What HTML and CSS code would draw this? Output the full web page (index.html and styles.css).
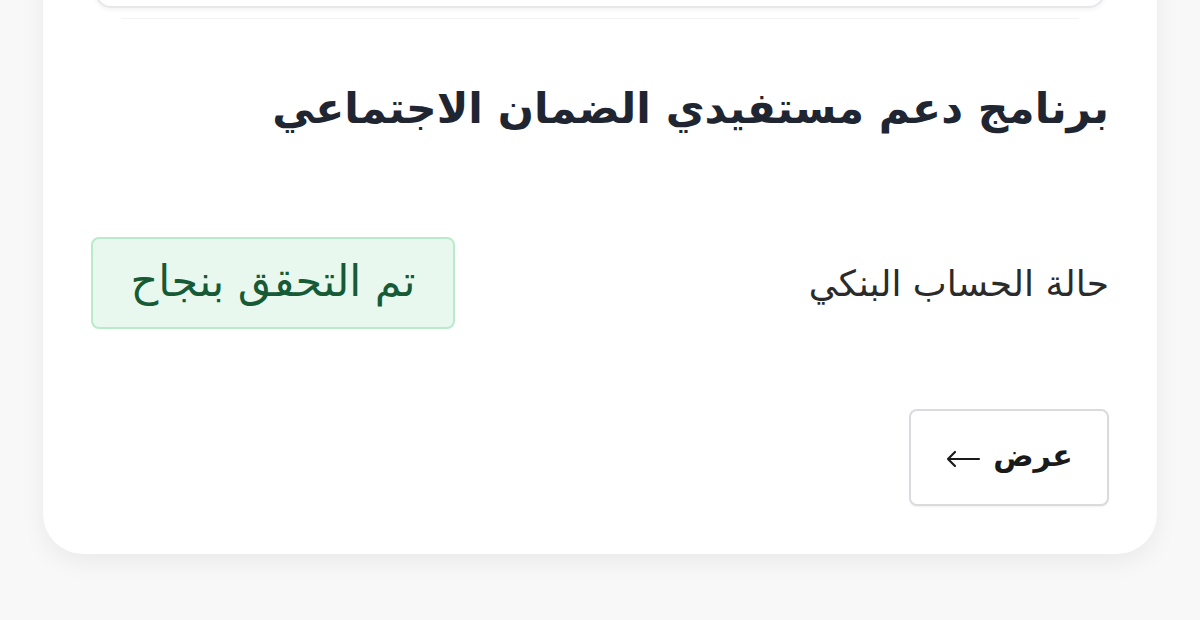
FILE: index.html
```html
<!DOCTYPE html>
<html lang="ar" dir="rtl">
<head>
<meta charset="utf-8">
<link rel="stylesheet" href="styles.css">
</head>
<body>
<div class="page">
  <div class="card">
    <div class="top-box"></div>
    <div class="divider"></div>
    <h1 class="title">برنامج دعم مستفيدي الضمان الاجتماعي</h1>
    <div class="row">
      <span class="label">حالة الحساب البنكي</span>
      <span class="badge">تم التحقق بنجاح</span>
    </div>
    <div class="actions">
      <button class="btn">عرض <svg class="arrow" width="36" height="22" viewBox="0 0 36 22" aria-hidden="true"><path d="M34 11H3M10 4L3 11L10 18" fill="none" stroke="#1a1a1a" stroke-width="2.2" stroke-linecap="round" stroke-linejoin="round"/></svg></button>
    </div>
  </div>
</div>
</body>
</html>
```
FILE: styles.css
```css
html, body {
  margin: 0;
  padding: 0;
  background: #f8f8f9;
  font-family: "DejaVu Sans", "Noto Sans", sans-serif;
}
.page {
  padding: 0 43px;
  height: 620px;
  overflow: hidden;
}
.card {
  margin-top: -60px;
  background: #ffffff;
  border-radius: 0 0 40px 40px;
  box-shadow: 0 8px 24px rgba(0,0,0,0.06);
  padding: 0 48px 48px 48px;
}
.top-box {
  margin: 0 4px;
  height: 66px;
  border: 2px solid #e5e7eb;
  border-top: none;
  border-radius: 0 0 16px 16px;
  box-shadow: 0 2px 4px rgba(0,0,0,0.05);
}
.divider {
  margin: 10px 30px 0;
  height: 1px;
  background: #f2f3f4;
}
.title {
  margin: 60px 0 0;
  font-size: 42.5px;
  font-weight: 700;
  color: #1f2632;
  line-height: 60px;
}
.row {
  margin-top: 98px;
  display: flex;
  justify-content: space-between;
  align-items: center;
}
.label {
  font-size: 36px;
  color: #2b2b2b;
}
.badge {
  width: 364px;
  height: 92px;
  box-sizing: border-box;
  display: flex;
  align-items: center;
  justify-content: center;
  background: #e8f8ee;
  border: 2px solid #b9ebcb;
  border-radius: 8px;
  color: #175a36;
  font-size: 43px;
  padding-bottom: 4px;
}
.actions {
  margin-top: 80px;
  display: flex;
}
.btn {
  width: 200px;
  height: 97px;
  background: #fff;
  border: 2px solid #d9dbde;
  border-radius: 8px;
  font-family: inherit;
  font-size: 30px;
  font-weight: 700;
  color: #1a1a1a;
  display: flex;
  align-items: center;
  justify-content: center;
  gap: 12px;
  box-shadow: 0 1px 2px rgba(0,0,0,0.06);
  padding: 0 0 4px;
}
.arrow {
  display: block;
  margin-top: 6px;
}
```
